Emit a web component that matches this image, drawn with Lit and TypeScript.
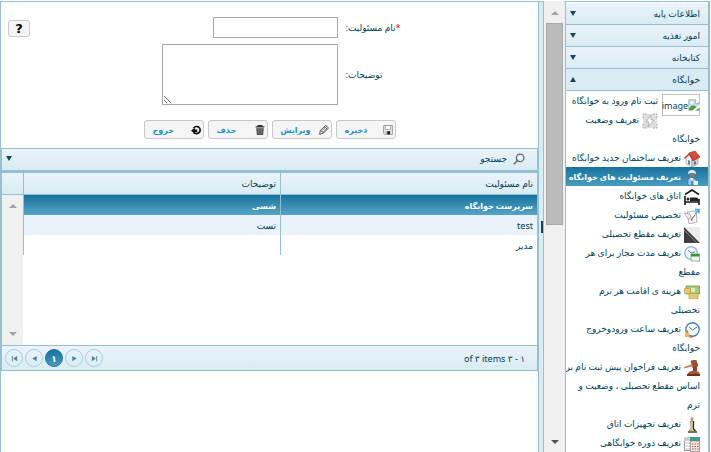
import { LitElement, html, css, svg, nothing } from "lit";
import { customElement, state } from "lit/decorators.js";

const icons: Record<string, unknown> = {
  battery: svg`<rect x="1" y="1" width="14" height="14" rx="1" fill="#dedede"/><path d="M1 5V1h4M11 1h4v4M15 11v4h-4M5 15H1v-4" stroke="#aaa" fill="none" stroke-dasharray="2 1"/><path d="M9 2 4 9h3l-1 5 6-7H9z" fill="#fff" stroke="#a5a5a5" stroke-width=".8"/>`,
  house: svg`<path d="M2 7v6l6 3V8L5 3z" fill="#e9ebee" stroke="#8b8b8b" stroke-width=".5"/><path d="M8 9v7l6-3V7z" fill="#cfd3d8" stroke="#7f7f7f" stroke-width=".5"/><path d="m5 2 6-2 5 6-7 4z" fill="#de4b38" stroke="#93271c" stroke-width=".6"/><path d="m5 2-5 5 1 1 4-4 4 6 1-1z" fill="#b8402f"/><path d="M4 9v4l2 1v-4z" fill="#6d7f92"/><path d="M10 11v3l2-1v-3z" fill="#53789e"/>`,
  person: svg`<path d="M5 4h6l-1 3-2 1-2-1z" fill="#a8714c"/><path d="M4 4q0-4 4-4 4 0 4 4-4-2-8 0z" fill="#dcebf5"/><path d="M4 15l0-5 2-2h3l3 2 1 5z" fill="#9cc8e6" stroke="#3f7397" stroke-width=".5"/><path d="m6 8 2 3 1-3z" fill="#fff"/><path d="M8 11v4" stroke="#235989" fill="none"/><path d="M10 11h4v4h-4z" fill="#e9f4fb"/>`,
  bed: svg`<path d="M1 5.500 8 1l7 4.500" fill="none" stroke="#161616" stroke-width="1.500"/><path d="M1 7v9M1 13h14M15 10v6" fill="none" stroke="#161616" stroke-width="1.600"/><circle cx="4" cy="10" r="1.500" fill="#222"/><path d="M6 8.500h7l2 2v1.500H6z" fill="#222"/>`,
  note: svg`<path d="m3 4 9-1 1 11-8 2z" fill="#f8f8f8" stroke="#a0a0a0" stroke-width=".8"/><path d="m0 5 6 1 1 4-3 1z" fill="#eee" stroke="#888" stroke-width=".6"/><path d="M7 12 11 7" stroke="#555"/><path d="m11 6 4-4M11 1.500h4v4" stroke="#3f9fe0" stroke-width="1.400" fill="none"/><circle cx="8" cy="12" r=".8" fill="#b03c33"/>`,
  slope: svg`<rect width="16" height="16" fill="#ececec"/><path d="M0 0v16h16z" fill="#3f3f3f"/><path d="M0 3 13 16" stroke="#8a8a8a" stroke-width=".9"/>`,
  clockSheet: svg`<circle cx="7" cy="7" r="6.300" fill="#e9f3fb" stroke="#8fb6d8" stroke-width="1.200"/><path d="M7 7 4 4M7 7l4-1" stroke="#6c8cab" fill="none"/><path d="M7 8h8.500v7H7z" fill="#f6faf2" stroke="#6ea75d" stroke-width=".8"/><path d="M7 8h8.500v2.500H7z" fill="#3d9436"/>`,
  money: svg`<path d="M2 2h13.500v8H2z" fill="#a9cb7c" stroke="#6b9142" stroke-width=".8"/><circle cx="9" cy="6" r="2.400" fill="#dcebb8"/><path d="M.5 4.500h6v5h-6zM5 9.500h9v5H5z" fill="#ecd67c" stroke="#b59a3b" stroke-width=".7"/><path d="M1 7h5M5 12h9" stroke="#c2a544" stroke-width=".7"/>`,
  clock: svg`<circle cx="8.500" cy="7.500" r="6.700" fill="#f6fafd" stroke="#4a80ba" stroke-width="1.400"/><path d="m5 5 3.500 3L13 5" stroke="#47749f" fill="none"/><path d="M1 15v-3l2-2 2.500 2v3z" fill="#f0b04d"/><circle cx="3" cy="9.500" r="1.500" fill="#d3854b"/><path d="M5 15h4" stroke="#c0533a"/>`,
  gavel: svg`<path d="m7 1 5-1 2 6-5 2z" fill="#a44f2c" stroke="#71301a" stroke-width=".6"/><path d="m8 4-8 3 .5 1.500L9 6z" fill="#c98157"/><path d="M9 7h4v4H9z" fill="#8f3d22"/><path d="M5 12q4-3 10 0l1 3H3z" fill="#a95433"/><path d="M3 14h13v2H3z" fill="#71301a"/>`,
  chess: svg`<path d="M8 0v4M6.500 2h3" stroke="#867b52"/><path d="M6.500 4h3l-.5 7 3 3H5l2-3z" fill="#ddd6ad" stroke="#7a7550" stroke-width=".6"/><path d="M9.500 4v8l2 2" stroke="#292b1e" stroke-width="1.200" fill="none"/><path d="M4 14h9v2H4z" fill="#7c774e"/>`,
  calendar: svg`<rect x=".5" y="3.500" width="9" height="11" fill="#fff" stroke="#999"/><path d="M2 7h6M2 10h6M2 13h6" stroke="#999" stroke-dasharray="1.500 1"/><path d="M0 1h9v4H0z" fill="#c9cdcd"/><path d="M6 1h10v4H6z" fill="#3b9e87"/><path d="M6.500 5h9v10.500h-9z" fill="#f8e8e4" stroke="#8a8a8a" stroke-width=".8"/><path d="M8 8h7M8 10.500h7M8 13h7" stroke="#bc4e43" stroke-width="1.200" stroke-dasharray="1.500 1"/>`,
  save: svg`<path d="M1 1h14v14H3l-2-2z" fill="#e6e6e6" stroke="#666"/><path d="M4 1h8v6H4z" fill="#fff" stroke="#888"/><path d="M4 10h8v5H4z" fill="#bbb"/><path d="M7 10h4v5H7z" fill="#111"/>`,
  pencil: svg`<path d="m1 15 1-6 8-8q3 0 5 4l-8 8z" fill="#fff" stroke="#444" stroke-width="1.400"/><path d="M2 9q3 0 5 4M8 3q3 0 5 4M5 9l5-5M7 11l5-5" fill="none" stroke="#444" stroke-width="1.300"/>`,
  trash: svg`<path d="M1 3h14M5 3V1h6v2" stroke="#333" fill="none" stroke-width="1.800"/><path d="M2 5h12l-1 11H3z" fill="#444"/><path d="M5 6v9M8 6v9M11 6v9" stroke="#aaa"/>`,
  exit: svg`<path d="M4 5q3-4 8-2 4 3 2 8-4 5-10 1" stroke="#111" stroke-width="2.600" fill="none"/><path d="M0 9 6 4v3h4v4H6v3z" fill="#111"/>`,
  search: svg`<circle cx="9.500" cy="6.500" r="5" fill="none" stroke="#666" stroke-width="1.700"/><path d="m6 10-5 5" stroke="#666" stroke-width="2"/>`,
  broken: svg`<path d="M1 1h9l5 5v9H1z" fill="#c6dbf4" stroke="#9ca5ad"/><path d="M10 1v5h5" fill="#fff" stroke="#9ca5ad"/><path d="M1 15q2-8 8-6l6 4v2z" fill="#45a52c"/><path d="m5 16 11-9v4l-7 5z" fill="#fff"/><circle cx="5" cy="5" r="2" fill="#fff"/>`,
  first: svg`<path d="M2 2h2v12H2zM14 2v12L5 8z" fill="#4f8298"/>`,
  prev: svg`<path d="M13 2v12L3 8z" fill="#4f8298"/>`,
  next: svg`<path d="M3 2v12l10-6z" fill="#4f8298"/>`,
  last: svg`<path d="M12 2h2v12h-2zM2 2v12l9-6z" fill="#4f8298"/>`,
};

const icon = (name: string, cls = "icon") =>
  html`<svg class=${cls} viewBox="0 0 16 16" aria-hidden="true">${icons[name]}</svg>`;

const sections = ["اطلاعات پایه", "امور تغذیه", "کتابخانه", "خوابگاه"];

const links: { icon: string; text: string }[] = [
  { icon: "image", text: "ثبت نام ورود به خوابگاه" },
  { icon: "battery", text: "تعریف وضعیت\nخوابگاه" },
  { icon: "house", text: "تعریف ساختمان جدید خوابگاه" },
  { icon: "person", text: "تعریف مسئولیت های خوابگاه" },
  { icon: "bed", text: "اتاق های خوابگاه" },
  { icon: "note", text: "تخصیص مسئولیت" },
  { icon: "slope", text: "تعریف مقطع تحصیلی" },
  { icon: "clockSheet", text: "تعریف مدت مجاز برای هر\nمقطع" },
  { icon: "money", text: "هزینه ی اقامت هر ترم\nتحصیلی" },
  { icon: "clock", text: "تعریف ساعت ورودوخروج\nخوابگاه" },
  { icon: "gavel", text: "تعریف فراخوان پیش ثبت نام بر\nاساس مقطع تحصیلی ، وضعیت و\nترم" },
  { icon: "chess", text: "تعریف تجهیزات اتاق" },
  { icon: "calendar", text: "تعریف دوره خوابگاهی" },
];

const rows = [
  ["سرپرست خوابگاه", "شسی"],
  ["test", "تست"],
  ["مدیر", ""],
];

const actions = [
  ["save", "ذخیره"],
  ["pencil", "ویرایش"],
  ["trash", "حذف"],
  ["exit", "خروج"],
];

@customElement("app-root")
export class AppRoot extends LitElement {
  @state() private selected = 0;

  static styles = css`
    :host {
      --line: #94c0d2;
      --ink: #14475c;
      --bar: linear-gradient(#eaf3f9, #d9ecf3);
      display: flex;
      direction: rtl;
      height: 100vh;
      box-sizing: border-box;
      padding: 1px 0 0;
      overflow: hidden;
      background: #fff;
      color: #003f59;
      font: 9px/19px "Noto Sans", "DejaVu Sans", sans-serif;
    }
    * { box-sizing: border-box; }
    button, input, textarea { font: inherit; color: inherit; margin: 0; }
    button { cursor: pointer; }
    svg { flex: none; }

    .side {
      width: 145px;
      flex: none;
      margin-right: 1px;
      padding-top: 1px;
      border: solid var(--line);
      border-width: 1px 2px 0 1px;
      overflow: hidden;
    }
    .section {
      display: flex;
      justify-content: space-between;
      align-items: center;
      width: 100%;
      height: 22px;
      padding: 0 8px 0 4px;
      border: 0;
      border-bottom: 1px solid var(--line);
      background: var(--bar);
    }
    .section.open { background: #d9ecf3; }
    .caret {
      border: 3px solid transparent;
      border-top: 5px solid var(--ink);
      border-bottom: 0;
    }
    .caret.up { border-top: 0; border-bottom: 5px solid var(--ink); }
    .menu { list-style: none; margin: 0; padding: 0; }
    .link {
      display: block;
      padding: 0 8px;
      color: inherit;
      text-decoration: none;
      white-space: pre;
      min-height: 19px;
    }
    .link.current {
      background: linear-gradient(#17739e, #479cbf);
      color: #fff;
      font-weight: bold;
      font-size: 8px;
    }
    .icon { width: 16px; height: 16px; vertical-align: middle; margin-left: 3px; }
    .missing {
      float: right;
      display: flex;
      direction: ltr;
      align-items: center;
      justify-content: center;
      width: 38px;
      height: 22px;
      margin: 3px 0 0 4px;
      border: 1px solid #c0c0c0;
    }
    .missing-icon { width: 12px; height: 16px; }

    .scroll {
      display: flex;
      flex-direction: column;
      align-items: center;
      width: 21px;
      flex: none;
      background: #f0f0f0;
    }
    .scroll.page { padding: 10px 0 8px; }
    .scroll.list { flex: 1; justify-content: space-between; padding: 9px 0; }
    .thumb { width: 17px; height: 202px; margin-top: 8px; background: #bbb; border: 1px solid #a8a8a8; }
    .arrow { border: 4px solid transparent; border-top: 4px solid #a3a3a3; border-bottom: 0; }
    .arrow.up { border-top: 0; border-bottom: 4px solid #a3a3a3; }
    .arrow.dark { margin-top: auto; border-top-color: #505050; }

    .splitter {
      display: flex;
      align-items: center;
      justify-content: flex-start;
      width: 6px;
      flex: none;
      border: solid var(--line);
      border-width: 1px 1px 0;
      background: #d9ecf3;
    }
    .grip { width: 2px; height: 12px; background: var(--ink); }

    .main {
      flex: 1;
      min-width: 0;
      border: solid var(--line);
      border-width: 1px 0 0 1px;
    }
    .top { position: relative; padding: 15px 0 9px; }
    .form {
      display: grid;
      grid-template-columns: 56px 176px;
      gap: 6px 8px;
      justify-content: center;
      align-items: center;
      padding-left: 24px;
    }
    .form label { text-align: left; white-space: nowrap; }
    .required { color: #f00; }
    .field { border: 1px solid #a9a9a9; background: #fff; border-radius: 0; padding: 2px; outline: 0; }
    .name { width: 125px; height: 21px; }
    .notes { display: block; width: 100%; height: 61px; resize: both; }
    .help {
      position: absolute;
      left: 7px;
      top: 18px;
      width: 22px;
      height: 17px;
      padding: 0;
      border: 1px solid #c9c9c9;
      border-radius: 3px;
      background: #f5f5f5;
      color: #000;
      font: bold 13px/14px "DejaVu Sans", sans-serif;
    }
    .actions { display: flex; justify-content: center; gap: 4px; margin-top: 15px; }
    .action {
      display: flex;
      justify-content: space-between;
      align-items: center;
      width: 60px;
      height: 19px;
      padding: 0 2px 0 8px;
      border: 1px solid #c9c9c9;
      border-radius: 3px;
      background: #f5f5f5;
      color: #2490bd;
      font-weight: bold;
      font-size: 8px;
    }
    .action-icon { width: 10px; height: 10px; }

    .panel { border: 1px solid var(--line); }
    .search {
      display: flex;
      align-items: center;
      gap: 6px;
      width: 100%;
      height: 24px;
      padding: 0 12px 2px 4px;
      border: 0;
      border-bottom: 3px solid var(--line);
      background: var(--bar);
    }
    .search .caret { margin-right: auto; }
    .search-icon { width: 12px; height: 12px; }
    .grid { display: flex; height: 172px; }
    .table-box { flex: 1; min-width: 0; }
    table { width: 100%; table-layout: fixed; border-collapse: separate; border-spacing: 0; }
    th, td { height: 20px; padding: 0 4px; text-align: right; border-left: 1px solid var(--line); }
    th { height: 22px; border-bottom: 1px solid var(--line); font-weight: normal; background: var(--bar); }
    tr.alt td { background: #eaf3f9; }
    tr.current { color: #fff; font-weight: bold; font-size: 8px; }
    tr.current td { background: linear-gradient(#17739e, #57a5c5); }
    .rail { display: flex; flex-direction: column; width: 21px; flex: none; }
    .corner { height: 22px; flex: none; background: var(--bar); border-bottom: 1px solid var(--line); }
    .pager {
      display: flex;
      align-items: center;
      justify-content: space-between;
      height: 25px;
      padding: 0 12px 0 3px;
      border-top: 1px solid var(--line);
      background: var(--bar);
    }
    .pages { display: flex; direction: ltr; gap: 2px; }
    .page-button {
      display: flex;
      align-items: center;
      justify-content: center;
      width: 18px;
      height: 18px;
      padding: 0;
      border: 1px solid #a9cfdf;
      border-radius: 50%;
      background: transparent;
    }
    .page-button.current { border-color: #17739e; background: linear-gradient(#17739e, #479cbf); color: #fff; font-weight: bold; }
    .page-icon { width: 7px; height: 7px; }
  `;

  private renderLink(item: { icon: string; text: string }) {
    return html`<li><a class="link ${item.icon === "person" ? "current" : ""}" href="#">${
      item.icon === "image"
        ? html`<span class="missing">image${icon("broken", "missing-icon")}</span>`
        : icon(item.icon)
    }${item.text}</a></li>`;
  }

  render() {
    return html`
      <nav class="side">
        ${sections.map((s, i) => {
          const open = i === sections.length - 1;
          return html`<button class="section ${open ? "open" : ""}">${s}<span class="caret ${open ? "up" : ""}"></span></button>`;
        })}
        <ul class="menu">${links.map((l) => this.renderLink(l))}</ul>
      </nav>
      <div class="scroll page">
        <span class="arrow up"></span><span class="thumb"></span><span class="arrow dark"></span>
      </div>
      <div class="splitter"><span class="grip"></span></div>
      <main class="main">
        <div class="top">
          <button class="help">?</button>
          <div class="form">
            <label for="name"><span class="required">*</span>نام مسئولیت:</label>
            <input id="name" class="field name" />
            <label for="notes">توضیحات:</label>
            <textarea id="notes" class="field notes"></textarea>
          </div>
          <div class="actions">
            ${actions.map(([n, t]) => html`<button class="action">${icon(n, "action-icon")}<span>${t}</span></button>`)}
          </div>
        </div>
        <section class="panel">
          <button class="search">${icon("search", "search-icon")}<span>جستجو</span><span class="caret"></span></button>
          <div class="grid">
            <div class="table-box">
              <table>
                <thead><tr><th>نام مسئولیت</th><th>توضیحات</th></tr></thead>
                <tbody>
                  ${rows.map((r, i) => html`<tr
                    class=${i === this.selected ? "current" : i % 2 ? "alt" : nothing}
                    @click=${() => (this.selected = i)}
                  >${r.map((c) => html`<td>${c}</td>`)}</tr>`)}
                </tbody>
              </table>
            </div>
            <div class="rail">
              <div class="corner"></div>
              <div class="scroll list"><span class="arrow up"></span><span class="arrow"></span></div>
            </div>
          </div>
          <div class="pager">
            <span>۱ - ۳ of ۳ items</span>
            <div class="pages">
              <button class="page-button" aria-label="first">${icon("first", "page-icon")}</button>
              <button class="page-button" aria-label="previous">${icon("prev", "page-icon")}</button>
              <button class="page-button current">۱</button>
              <button class="page-button" aria-label="next">${icon("next", "page-icon")}</button>
              <button class="page-button" aria-label="last">${icon("last", "page-icon")}</button>
            </div>
          </div>
        </section>
      </main>
    `;
  }
}
